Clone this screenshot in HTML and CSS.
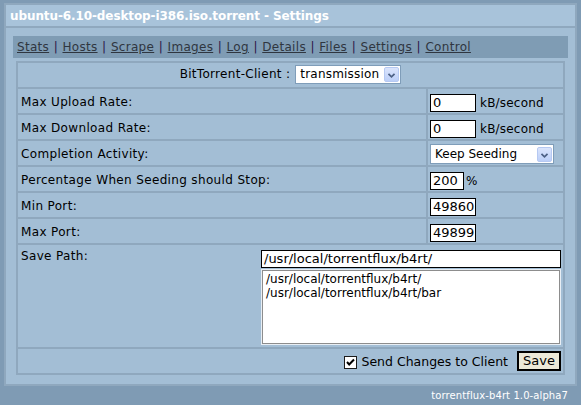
FILE: index.html
```html
<!DOCTYPE html>
<html>
<head>
<meta charset="utf-8">
<title>Settings</title>
<link rel="stylesheet" href="styles.css">
</head>
<body>
<div class="panel">
  <div class="title">ubuntu-6.10-desktop-i386.iso.torrent - Settings</div>
  <div class="content">
    <div class="tabs"><a href="#">Stats</a><span class="sep">|</span><a href="#">Hosts</a><span class="sep">|</span><a href="#">Scrape</a><span class="sep">|</span><a href="#">Images</a><span class="sep">|</span><a href="#">Log</a><span class="sep">|</span><a href="#">Details</a><span class="sep">|</span><a href="#">Files</a><span class="sep">|</span><a href="#">Settings</a><span class="sep">|</span><a href="#">Control</a></div>
    <div class="settings">
      <div class="cell full client">
        <span class="client-label">BitTorrent-Client :</span>
        <span class="select sel-client"><span class="sel-text">transmission</span><span class="sel-btn"><svg width="15" height="15" viewBox="0 0 15 15"><path d="M4 5.5 L7.5 9 L11 5.5" fill="none" stroke="#4d6185" stroke-width="2"/></svg></span></span>
      </div>
      <div class="cell label">Max Upload Rate:</div>
      <div class="cell value"><span class="input w46">0</span><span class="unit">kB/second</span></div>
      <div class="cell label">Max Download Rate:</div>
      <div class="cell value"><span class="input w46">0</span><span class="unit">kB/second</span></div>
      <div class="cell label">Completion Activity:</div>
      <div class="cell value sel-cell"><span class="select sel-seed"><span class="sel-text">Keep Seeding</span><span class="sel-btn"><svg width="15" height="15" viewBox="0 0 15 15"><path d="M4 5.5 L7.5 9 L11 5.5" fill="none" stroke="#4d6185" stroke-width="2"/></svg></span></span></div>
      <div class="cell label">Percentage When Seeding should Stop:</div>
      <div class="cell value"><span class="input w34">200</span><span class="unit pct">%</span></div>
      <div class="cell label">Min Port:</div>
      <div class="cell value"><span class="input w46">49860</span></div>
      <div class="cell label">Max Port:</div>
      <div class="cell value"><span class="input w46">49899</span></div>
      <div class="cell full path-row">
        <div class="path-label">Save Path:</div>
        <div class="path-fields">
          <span class="input path">/usr/local/torrentflux/b4rt/</span>
          <div class="list">
            <div>/usr/local/torrentflux/b4rt/</div>
            <div>/usr/local/torrentflux/b4rt/bar</div>
          </div>
        </div>
      </div>
      <div class="cell full submit">
        <span class="check"><svg width="11" height="11" viewBox="0 0 11 11"><path d="M2 5 L4.2 7.5 L9 2.5" fill="none" stroke="#000" stroke-width="2"/></svg></span>
        <span class="check-label">Send Changes to Client</span>
        <span class="button">Save</span>
      </div>
    </div>
  </div>
</div>
<div class="footer">torrentflux-b4rt 1.0-alpha7</div>
</body>
</html>
```
FILE: styles.css
```css
body {
  margin: 0;
  background: #7f9bb4;
  font-family: "DejaVu Sans", Verdana, sans-serif;
  font-size: 12px;
  color: #000;
}

.panel {
  margin: 3px 4px 0;
  border: 2px solid #8fa8be;
  background: #a3bed5;
}

.title {
  height: 21px;
  line-height: 22px;
  padding-left: 4px;
  background: #a8c3da;
  border-bottom: 2px solid #8fa8be;
  color: #fff;
  font-weight: bold;
  font-size: 12px;
  letter-spacing: -0.1px;
}

.content {
  padding: 8px 7px 9px;
}

.tabs {
  height: 22px;
  line-height: 22px;
  padding-left: 4px;
  background: #7f9cb4;
  font-size: 12px;
  letter-spacing: 0.3px;
}

.tabs a {
  color: #2f3640;
  text-decoration: underline;
}

.tabs .sep {
  color: #2a1448;
  margin: 0 4.5px;
}

.settings {
  margin: 3px 3px 0;
  display: grid;
  grid-template-columns: 1fr 135px;
  gap: 2px;
  padding: 2px;
  background: #8fa8be;
}

.cell {
  background: #a3bed5;
  height: 24px;
  box-sizing: border-box;
}

.full {
  grid-column: 1 / 3;
}

.label {
  padding: 3px 3px 0;
  line-height: 21px;
  letter-spacing: 0.35px;
}

.value {
  display: flex;
  align-items: center;
  padding: 5px 2px 1px;
  gap: 4px;
}

.sel-cell {
  padding: 3px 2px 1px;
  align-items: flex-start;
}

.client {
  display: flex;
  justify-content: center;
  align-items: baseline;
  gap: 5px;
  padding-top: 2px;
}

.client-label {
  letter-spacing: 0.3px;
}

.input {
  display: inline-block;
  box-sizing: border-box;
  height: 18px;
  line-height: 16px;
  border: 1px solid #000;
  background: #fff;
  padding: 0 2px;
  font-size: 13px;
  white-space: nowrap;
  overflow: hidden;
}

.w46 { width: 46px; }
.w34 { width: 34px; }

.unit {
  font-size: 12px;
  letter-spacing: 0.2px;
}

.pct {
  margin-left: -2px;
}

.select {
  display: inline-flex;
  box-sizing: border-box;
  align-items: center;
  border: 1px solid #7f9db9;
  background: #fff;
  padding: 1px;
  font-size: 12px;
}

.sel-client {
  width: 106px;
  height: 19px;
  letter-spacing: 0.2px;
}

.sel-seed {
  width: 124px;
  height: 20px;
}

.sel-text {
  flex: 1;
  padding-left: 3px;
  line-height: 15px;
}

.sel-btn {
  display: flex;
  width: 15px;
  height: 15px;
  box-sizing: border-box;
  border: 1px solid #b6c9f2;
  border-radius: 2px;
  background: linear-gradient(#dbe5fc, #bccff8);
}

.path-row {
  height: 102px;
  display: flex;
}

.path-label {
  flex: 1;
  padding: 3px 3px 0;
  line-height: 17px;
  letter-spacing: 0.35px;
}

.path-fields {
  width: 300px;
  padding: 5px 2px 0 0;
  display: flex;
  flex-direction: column;
}

.path {
  width: 300px;
  height: 18px;
  font-size: 13px;
}

.list {
  margin: 2px 1px 0;
  height: 74px;
  box-sizing: border-box;
  background: #fff;
  border: 1px solid #8d8d8d;
  box-shadow: 0 0 0 1px #e8eef4;
  padding: 1px 3px;
  font-size: 12px;
  line-height: 14px;
}

.submit {
  display: flex;
  justify-content: flex-end;
  align-items: center;
  padding: 0 2px 0 0;
}

.check {
  display: flex;
  align-items: center;
  justify-content: center;
  width: 13px;
  height: 13px;
  box-sizing: border-box;
  border: 1px solid #1c1c1c;
  background: #fff;
  margin-top: 2px;
}

.check-label {
  margin-left: 4px;
  font-size: 12.5px;
}

.button {
  margin-left: 9px;
  width: 44px;
  height: 20px;
  box-sizing: border-box;
  border: 2px solid #000;
  background: #ece9d8;
  font-size: 13px;
  line-height: 16px;
  text-align: center;
}

.footer {
  text-align: right;
  padding-right: 13px;
  color: #fff;
  font-size: 10px;
  line-height: 19px;
  letter-spacing: 0.1px;
}
```
